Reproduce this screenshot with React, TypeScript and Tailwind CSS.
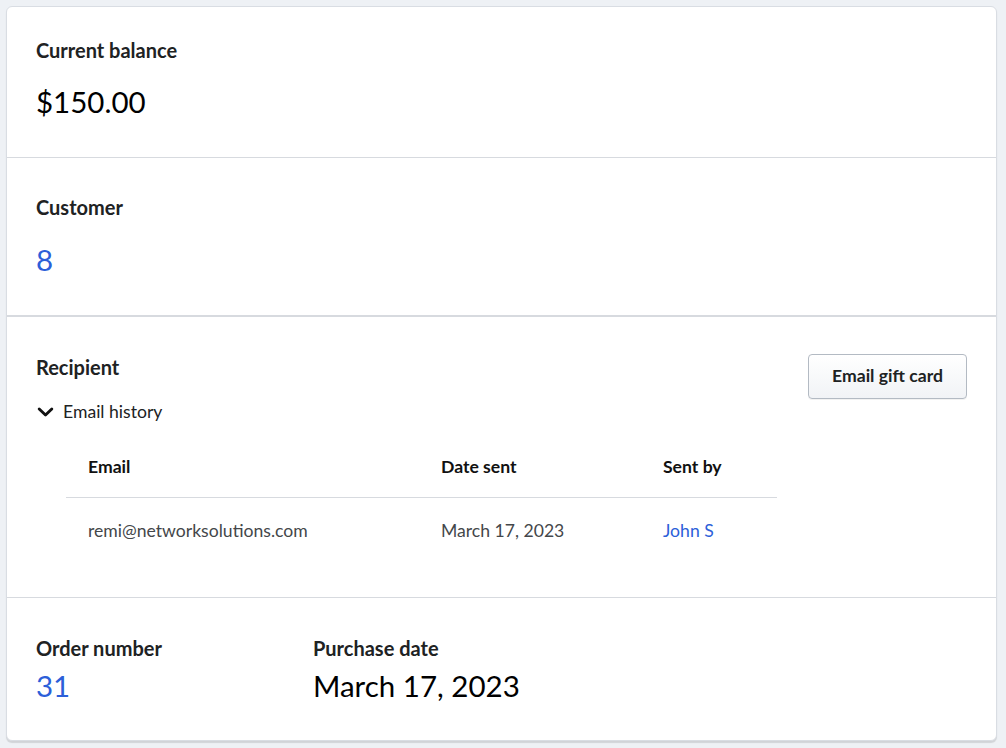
import React from "react";

export default function App() {
  const font = { fontFamily: "Lato, 'Noto Sans', sans-serif" };
  return (
    <div className="w-[1006px] h-[748px] bg-[#eef1f5] pt-[6px] pl-[6px]" style={font}>
      <div className="w-[991px] h-[735px] bg-white rounded-[6px] border border-[#d9dde3] shadow-[0_2px_1px_rgba(0,0,0,0.12)] flex flex-col text-[#202223] overflow-hidden">
        {/* Current balance */}
        <div className="h-[151px] px-[29px] pt-[31px] border-b border-[#d7dadf] flex flex-col">
          <div className="text-[20px] leading-[24px] font-bold">Current balance</div>
          <div className="mt-[22px] text-[29.5px] leading-[36px] text-black">$150.00</div>
        </div>
        {/* Customer */}
        <div className="h-[159px] px-[29px] pt-[37px] border-b-2 border-[#d7dadf] flex flex-col">
          <div className="text-[20px] leading-[24px] font-bold">Customer</div>
          <div className="mt-[23px] text-[29.5px] leading-[36px] text-[#2c5fd9]">8</div>
        </div>
        {/* Recipient */}
        <div className="h-[281px] pl-[29px] pr-[29px] pt-[38px] border-b border-[#d7dadf] flex justify-between">
          <div className="flex flex-col">
            <div className="text-[20px] leading-[24px] font-bold">Recipient</div>
            <div className="mt-[21px] flex items-center h-[24px]">
              <svg width="17" height="16" viewBox="0 0 17 16" className="ml-[1px]">
                <path d="M2.2 5 L8.5 11 L14.8 5" fill="none" stroke="#111" strokeWidth="2.9" strokeLinecap="round" strokeLinejoin="round" />
              </svg>
              <span className="ml-[9px] text-[17.6px] leading-[24px] text-[#202223]">Email history</span>
            </div>
            <div className="mt-[31px] ml-[30px] w-[711px]">
              <div className="grid grid-cols-[353px_222px_1fr] h-[43px] border-b border-[#d7dadf] pl-[22px] text-[17.6px] leading-[24px] font-bold text-[#111]">
                <div>Email</div>
                <div>Date sent</div>
                <div>Sent by</div>
              </div>
              <div className="grid grid-cols-[353px_222px_1fr] pl-[22px] pt-[21px] text-[17.6px] leading-[24px] text-[#44474a]">
                <div>remi@networksolutions.com</div>
                <div>March 17, 2023</div>
                <div className="text-[#2c5fd9]">John S</div>
              </div>
            </div>
          </div>
          <div className="-mt-[1px]">
            <button className="w-[159px] h-[45px] rounded-[4px] border border-[#b3bac3] bg-gradient-to-b from-white to-[#f1f3f6] text-[17.6px] font-bold text-[#202223] shadow-[0_1px_0_rgba(0,0,0,0.05)]">
              Email gift card
            </button>
          </div>
        </div>
        {/* Order */}
        <div className="flex-1 px-[29px] pt-[38px] flex">
          <div className="w-[277px] flex flex-col">
            <div className="text-[20px] leading-[24px] font-bold">Order number</div>
            <div className="mt-[8px] text-[29.5px] leading-[36px] text-[#2c5fd9]">31</div>
          </div>
          <div className="flex flex-col">
            <div className="text-[20px] leading-[24px] font-bold">Purchase date</div>
            <div className="mt-[8px] text-[29.5px] leading-[36px] text-black">March 17, 2023</div>
          </div>
        </div>
      </div>
    </div>
  );
}
